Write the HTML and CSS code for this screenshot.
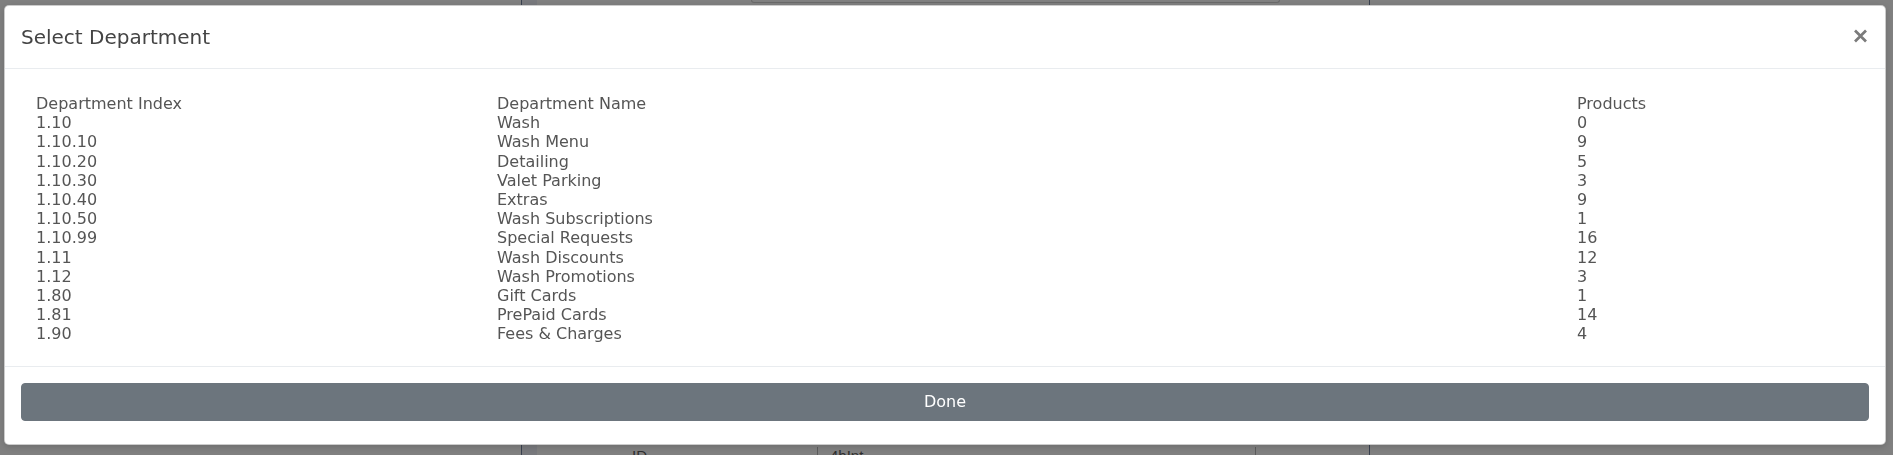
FILE: index.html
```html
<!DOCTYPE html>
<html lang="en">

<head>
    <meta charset="utf-8">
    <meta name="viewport" content="width=device-width, initial-scale=1.0">
    <title>Select Department</title>
    <link rel="stylesheet" href="styles.css">
</head>

<body>

    <div class="page">
        <div class="page-side"></div>
        <div class="panel">
            <div class="panel-gutter"></div>
            <div class="panel-main">
                <div class="search-box"></div>
                <div class="panel-row">
                    <span class="row-label">ID</span>
                    <span class="row-input">4hInt</span>
                </div>
            </div>
        </div>
    </div>

    <div class="backdrop">
        <div class="modal">
            <header class="modal-header">
                <h5 class="modal-title">Select Department</h5>
                <button class="close" aria-label="Close">
                    <svg width="15" height="14" viewBox="0 0 15 14">
                        <path d="M2 1.5 L13 12.5 M13 1.5 L2 12.5" stroke="#7b7b7b" stroke-width="2.7" fill="none" />
                    </svg>
                </button>
            </header>

            <div class="modal-body">
                <div id="liste" class="dept-table">
                    <div class="dept-row">
                        <span>Department Index</span>
                        <span>Department Name</span>
                        <span>Products</span>
                    </div>
                </div>
            </div>

            <footer class="modal-footer">
                <button class="btn-done">Done</button>
            </footer>
        </div>
    </div>

    <template>
        <div class="dept-row">
            <span class="index"></span>
            <span class="name"></span>
            <span class="products"></span>
        </div>
    </template>

    <script>
        const afdelinger = [
            ["1.10", "Wash", 0],
            ["1.10.10", "Wash Menu", 9],
            ["1.10.20", "Detailing", 5],
            ["1.10.30", "Valet Parking", 3],
            ["1.10.40", "Extras", 9],
            ["1.10.50", "Wash Subscriptions", 1],
            ["1.10.99", "Special Requests", 16],
            ["1.11", "Wash Discounts", 12],
            ["1.12", "Wash Promotions", 3],
            ["1.80", "Gift Cards", 1],
            ["1.81", "PrePaid Cards", 14],
            ["1.90", "Fees & Charges", 4]
        ];

        const dest = document.querySelector("#liste");
        const skabelon = document.querySelector("template").content;

        afdelinger.forEach(afd => {
            const klon = skabelon.cloneNode(true);
            klon.querySelector(".index").textContent = afd[0];
            klon.querySelector(".name").textContent = afd[1];
            klon.querySelector(".products").textContent = afd[2];
            dest.appendChild(klon);
        });
    </script>
</body>

</html>
```

FILE: styles.css
```css
body {
    margin: 0;
    background-color: #808080;
    font-family: "DejaVu Sans", Verdana, sans-serif;
    overflow: hidden;
}

/* dimmed page */
.page {
    display: flex;
    height: 455px;
}

.page-side {
    width: 521px;
}

.panel {
    display: flex;
    width: 847px;
    border-left: 1px solid #39414f;
    border-right: 1px solid #39414f;
}

.panel-gutter {
    width: 15px;
    background-color: #78797d;
}

.panel-main {
    flex: 1;
    display: flex;
    flex-direction: column;
    justify-content: space-between;
}

.search-box {
    margin: 0 89px 0 214px;
    height: 2px;
    border: 1px solid #6a6a6a;
    border-top: none;
    border-radius: 0 0 4px 4px;
}

.panel-row {
    display: flex;
    height: 8px;
    padding-left: 95px;
    font-family: "Liberation Sans Narrow", "Liberation Sans", sans-serif;
    font-size: 15px;
    line-height: 18px;
    color: #2e2e2e;
}

.row-label {
    width: 185px;
}

.row-input {
    width: 425px;
    padding-left: 12px;
    border-left: 1px solid #5c5c5c;
    border-right: 1px solid #5c5c5c;
}

/* modal */
.backdrop {
    position: fixed;
    top: 0;
    left: 0;
    right: 0;
    bottom: 0;
}

.modal {
    margin: 5px 7px 0 4px;
    background-color: #fff;
    border: 1px solid rgba(0, 0, 0, 0.2);
    border-radius: 5px;
    box-shadow: 0 2px 6px rgba(0, 0, 0, 0.15);
}

.modal-header {
    display: flex;
    align-items: center;
    justify-content: space-between;
    padding: 16px 17px 16px 16px;
    border-bottom: 1px solid #e9ecef;
}

.modal-title {
    margin: 0;
    font-size: 20px;
    font-weight: normal;
    line-height: 30px;
    color: #444;
}

.close {
    display: flex;
    padding: 0;
    border: none;
    background: none;
    margin-top: -3px;
    cursor: pointer;
}

.modal-body {
    padding: 25px 31px 22px 31px;
}

.dept-table {
    font-size: 16px;
    line-height: 19.2px;
    color: #555;
}

.dept-row {
    display: grid;
    grid-template-columns: 461px 1080px 1fr;
}

.modal-footer {
    padding: 16px 16px 23px 16px;
    border-top: 1px solid #e9ecef;
}

.btn-done {
    display: block;
    width: 100%;
    height: 38px;
    padding: 6px 12px;
    border: 1px solid #6c757d;
    border-radius: 4px;
    background-color: #6c757d;
    color: #fff;
    font-family: "DejaVu Sans", Verdana, sans-serif;
    font-size: 16px;
    line-height: 24px;
    cursor: pointer;
}
```
